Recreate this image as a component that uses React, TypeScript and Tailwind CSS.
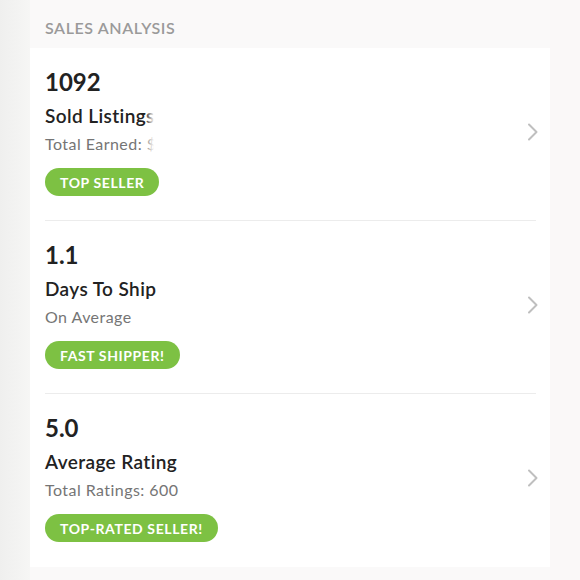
import React from "react";

interface Stat {
  value: string;
  title: string;
  subtitle: string;
  badge: string;
  faded?: boolean;
}

const stats: Stat[] = [
  {
    value: "1092",
    title: "Sold Listings",
    subtitle: "Total Earned: $",
    badge: "Top Seller",
    faded: true,
  },
  {
    value: "1.1",
    title: "Days To Ship",
    subtitle: "On Average",
    badge: "Fast Shipper!",
  },
  {
    value: "5.0",
    title: "Average Rating",
    subtitle: "Total Ratings: 600",
    badge: "Top-Rated Seller!",
  },
];

const Chevron = () => (
  <svg width="12" height="18" viewBox="0 0 12 18" fill="none" className="-mr-[3px] shrink-0">
    <path
      d="M2 1.5 L9.5 9 L2 16.5"
      stroke="#bfbfbf"
      strokeWidth="2"
      strokeLinecap="round"
      strokeLinejoin="round"
    />
  </svg>
);

const StatRow = ({ stat, last }: { stat: Stat; last: boolean }) => (
  <div
    className={
      last
        ? "relative ml-[15px] mr-[14px] flex items-center justify-between pt-[19px] pb-[25px]"
        : "relative ml-[15px] mr-[14px] flex items-center justify-between border-b border-[#ececec] pt-[19px] pb-[24px]"
    }
  >
    <div className="flex flex-col items-start">
      <div className="text-[24px] leading-[30px] font-bold text-[#222222]">
        {stat.value}
      </div>
      <div className="mt-[7px] text-[19px] leading-[24px] font-semibold tracking-[0.4px] text-[#222222]">
        {stat.title}
      </div>
      <div className="mt-[5px] text-[16px] leading-[22px] tracking-[0.45px] text-[#757575]">
        {stat.subtitle}
      </div>
      <div className="mt-[13px] flex h-[28px] items-center rounded-full bg-[#7dc143] px-[15px] text-[14px] font-bold uppercase tracking-[0.6px] text-white">
        {stat.badge}
      </div>
    </div>
    {stat.faded && (
      <div className="absolute left-[100px] top-[56px] flex h-[56px] w-[70px]">
        <div className="w-[9px] shrink-0 bg-linear-to-r from-white/0 to-white" />
        <div className="w-[61px] shrink-0 bg-white" />
      </div>
    )}
    <Chevron />
  </div>
);

export default function App() {
  return (
    <div
      className="flex h-[580px] w-[580px] bg-[#f2f2f1]"
      style={{ fontFamily: "Lato, 'Open Sans', sans-serif" }}
    >
      <div className="w-[30px] bg-linear-to-r from-[#efefee] to-[#f6f6f5]" />
      <div className="flex w-[520px] flex-col bg-[#faf9f9]">
        <div className="h-[48px] px-[15px] pt-[18px] text-[16px] leading-[20px] font-semibold uppercase tracking-[0.6px] text-[#9a9a9a]">
          Sales Analysis
        </div>
        <div className="flex flex-col bg-white">
          {stats.map((stat, i) => (
            <StatRow key={stat.value} stat={stat} last={i === stats.length - 1} />
          ))}
        </div>
      </div>
      <div className="w-[30px] bg-[#faf8f8]" />
    </div>
  );
}
